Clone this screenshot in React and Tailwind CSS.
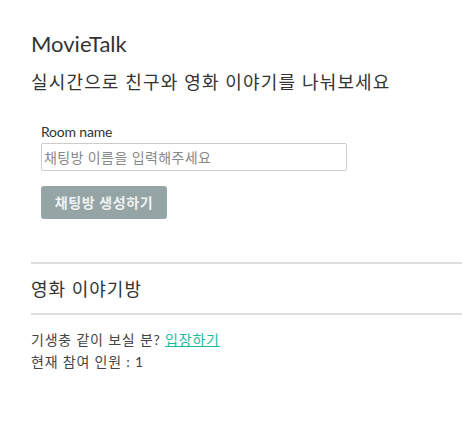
import React, { useState } from 'react';

const font = { fontFamily: 'Lato, "Noto Sans CJK KR", sans-serif' };

const App = () => {
  const [roomName, setRoomName] = useState('');

  return (
    <div className="min-h-screen bg-white pl-[31px] pt-[30px] text-[#333]" style={font}>
      <h1 className="text-[22px] leading-[28px]">MovieTalk</h1>
      <p className="mt-[12px] text-[18px] leading-[24px] tracking-[1.15px]">실시간으로 친구와 영화 이야기를 나눠보세요</p>

      <div className="mt-[30px] pl-[10px]">
        <label className="block text-[14px] leading-[16px] tracking-[-0.2px]">Room name</label>
        <input
          type="text"
          value={roomName}
          onChange={(e) => setRoomName(e.target.value)}
          placeholder="채팅방 이름을 입력해주세요"
          className="mt-[3px] h-[28px] w-[306px] rounded-[2px] border border-[#ccc] px-[2px] text-[14px] tracking-[0.4px] text-[#333] placeholder:text-[#888] outline-none"
        />
        <button
          disabled={!roomName}
          className="mt-[15px] block h-[33px] w-[126px] rounded-[3px] bg-[#95a5a6] text-[14px] font-semibold tracking-[0.6px] text-[#eef2f2]"
        >
          채팅방 생성하기
        </button>
      </div>

      <hr className="mt-[43px] border-t-2 border-[#dedede]" />
      <h2 className="pt-[13px] pb-[12px] text-[18px] leading-[24px] tracking-[1px]">영화 이야기방</h2>
      <hr className="border-t-2 border-[#dedede]" />

      <div className="mt-[14px] text-[14px] leading-[22px] tracking-[0.8px] text-[#444]">
        <div>
          기생충 같이 보실 분?{' '}
          <a href="#" className="text-[#1abc9c] underline">입장하기</a>
        </div>
        <div>현재 참여 인원 : 1</div>
      </div>
    </div>
  );
};

export default App;
